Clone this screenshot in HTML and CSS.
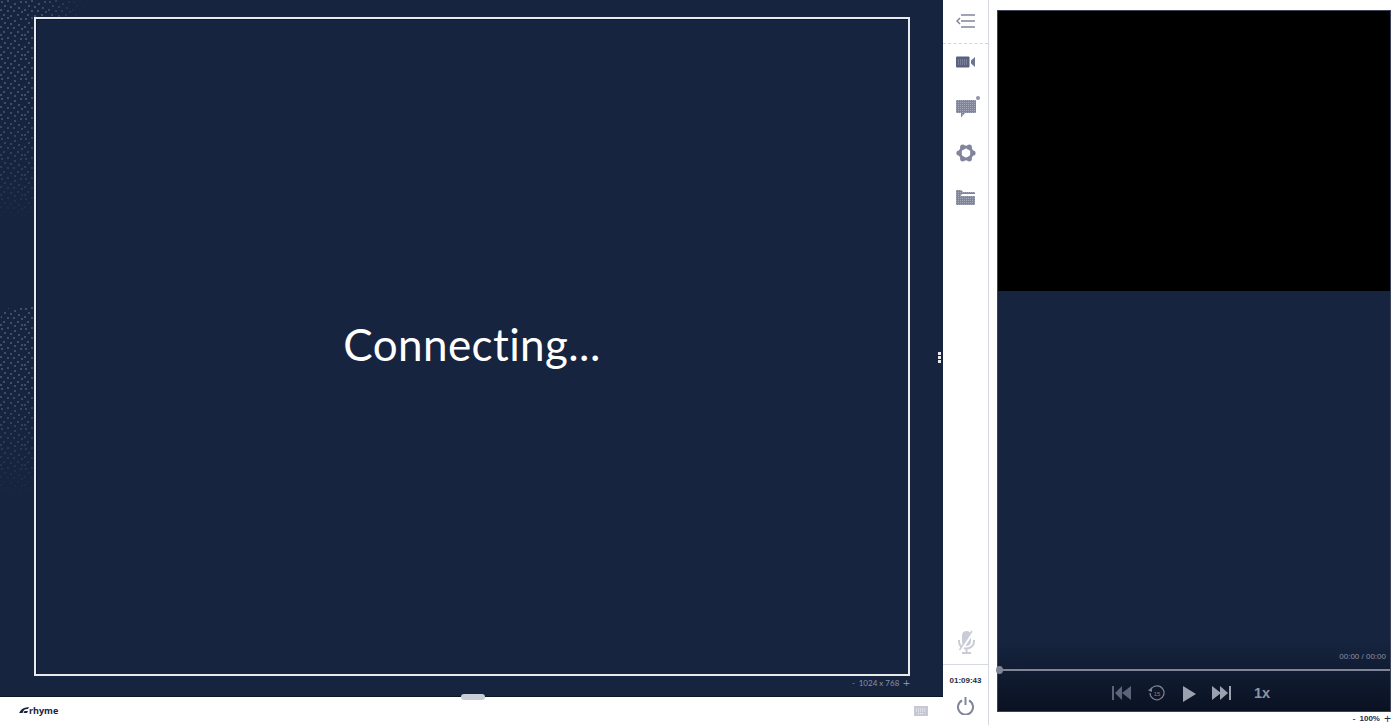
FILE: index.html
```html
<!DOCTYPE html>
<html lang="en">
<head>
	<meta charset="UTF-8">
	<title>Rhyme</title>
	<link rel="stylesheet" href="styles.css">
</head>
<body>
	<div class="app">
		<svg class="defs" width="0" height="0">
			<defs>
				<pattern id="dither" width="2" height="2" patternUnits="userSpaceOnUse">
					<rect width="1" height="1" fill="#fff" fill-opacity=".28"/>
				</pattern>
			</defs>
		</svg>
		<div class="main">
			<div class="stage">
				<span class="dots dots-top"></span>
				<span class="dots dots-left"></span>
				<span class="dots dots-mid"></span>
				<div class="frame">
					<span class="frame-text">Connecting...</span>
				</div>
				<div class="frame-size">
					<span>-</span>
					<span>1024 x 768</span>
					<span class="frame-plus">+</span>
				</div>
				<div class="grip-dots"><i></i><i></i><i></i></div>
				<span class="handle"></span>
			</div>
			<div class="footer">
				<div class="logo">
					<svg width="10" height="6" viewBox="0 0 10 6"><path d="M0 6 L2 3 Q4 .5 10 0 L9 2 Q6 2 5 3 L3.500 6 Z M5.500 4 H9 L8 6 H4.500 Z" fill="#16243f"/></svg>
					<span>rhyme</span>
				</div>
				<svg class="keyboard" width="14" height="10" viewBox="0 0 14 10"><rect width="14" height="10" fill="#c6c9d3"/><path d="M2 3h10M2 5h10M4 7.500h6" stroke="#f1f2f5" stroke-dasharray="1 1"/></svg>
			</div>
		</div>

		<div class="sidebar">
			<div class="menu-top">
				<svg width="20" height="14" viewBox="0 0 20 14" fill="none" stroke="#81859c" stroke-width="1.500"><path d="M5 1h14M5 7h14M5 13h14M4 4 1 7l3 3"/></svg>
			</div>
			<div class="tools">
				<svg width="19" height="12" viewBox="0 0 19 12"><rect width="13.500" height="11" y=".5" rx="1" fill="#5a6080"/><path d="M2 4h9M2 6h9M2 8h9" stroke="#9a9eb3" stroke-dasharray="1 1"/><path d="M15 4.500 19 1v10l-4-3.500z" fill="#70758f"/></svg>
				<div class="chat">
					<svg width="20" height="18" viewBox="0 0 20 18"><path d="M1 0h18a1 1 0 0 1 1 1v11a1 1 0 0 1-1 1H9l-4 4.500V13H1a1 1 0 0 1-1-1V1a1 1 0 0 1 1-1z" fill="#81859c"/><path d="M1 0h18a1 1 0 0 1 1 1v11a1 1 0 0 1-1 1H9l-4 4.500V13H1a1 1 0 0 1-1-1V1a1 1 0 0 1 1-1z" fill="url(#dither)"/></svg>
					<span class="chat-dot"></span>
				</div>
				<svg class="gear" width="20" height="18" viewBox="0 0 20 18" fill="#81859c"><circle cx="10" cy="9" r="6" fill="none" stroke="#81859c" stroke-width="3"/><circle cx="6.700" cy="3.200" r="2.600"/><circle cx="13.300" cy="3.200" r="2.600"/><circle cx="3" cy="9" r="2.600"/><circle cx="17" cy="9" r="2.600"/><circle cx="6.700" cy="14.800" r="2.600"/><circle cx="13.300" cy="14.800" r="2.600"/></svg>
				<svg width="19" height="15" viewBox="0 0 19 15"><path d="M0 1a1 1 0 0 1 1-1h4l2 2h11a1 1 0 0 1 1 1v1H6L4.500 6H19v8a1 1 0 0 1-1 1H1a1 1 0 0 1-1-1z" fill="#81859c"/><path d="M0 1a1 1 0 0 1 1-1h4l2 2h11a1 1 0 0 1 1 1v1H6L4.500 6H19v8a1 1 0 0 1-1 1H1a1 1 0 0 1-1-1z" fill="url(#dither)"/></svg>
			</div>
			<div class="mic">
				<svg width="18" height="24" viewBox="0 0 18 24"><rect x="5" y="1" width="9" height="15" rx="4.500" fill="#c9ccd6"/><path d="M2 10v1.500a7.500 7 0 0 0 15 0V10M9.500 19v3M5 23h9" fill="none" stroke="#c9ccd6" stroke-width="2"/><path d="M16.500 1 4 20" stroke="#fff" stroke-width="3"/><path d="M15 1 2.500 20" stroke="#c9ccd6" stroke-width="1.500"/></svg>
			</div>
			<div class="session">
				<span class="clock">01:09:43</span>
				<svg width="17" height="18" viewBox="0 0 17 18" fill="none" stroke="#81859c" stroke-width="2"><path d="M5 3.500a7.500 7.500 0 1 0 7 0M8.500 0v8"/></svg>
			</div>
		</div>

		<div class="player-col">
			<div class="player">
				<div class="video"></div>
				<div class="player-body">
					<div class="player-shade">
						<span class="player-time">00:00 / 00:00</span>
						<div class="progress"><span class="progress-knob"></span></div>
						<div class="controls">
							<svg width="19" height="14" viewBox="0 0 19 14" fill="#5d6479"><path d="M0 0h2v14H0zM10 0v14L3 7zM19 0v14l-9-7z"/></svg>
							<svg class="back15" width="17" height="16" viewBox="0 0 17 16" fill="none" stroke="#7d8395" stroke-width="1.200"><path d="M3.500 3.500A7 7 0 1 1 2 8"/><path d="M0 5.500 4 2v5z" fill="#7d8395" stroke="none"/><text x="9" y="10.500" text-anchor="middle" class="back15-num">15</text></svg>
							<svg class="play" width="13" height="16" viewBox="0 0 13 16" fill="#9ca1af"><path d="M0 0 13 8 0 16z"/></svg>
							<svg class="next" width="19" height="14" viewBox="0 0 19 14" fill="#9ca1af"><path d="M0 0l9 7-9 7zM8 0l8 7-8 7zM17 0h2v14h-2z"/></svg>
							<span class="speed">1x</span>
						</div>
					</div>
				</div>
			</div>
			<div class="zoom-bar">
				<span>-</span>
				<span>100%</span>
				<span class="zoom-plus">+</span>
			</div>
		</div>
	</div>
</body>
</html>
```

FILE: styles.css
```css
*{
	box-sizing: border-box;
}
html,body{
	margin: 0;
	height: 100%;
	overflow: hidden;
	background: #fff;
	font-family: "Lato", "Liberation Sans", sans-serif;
}
.app{
	display: flex;
	height: 725px;
}
.defs{
	flex: none;
}

/* left side */
.main{
	width: 943px;
	display: flex;
	flex-direction: column;
}
.stage{
	position: relative;
	height: 697px;
	padding: 17px 34px 0;
	background: #16243f;
	border-bottom: 1px solid #0b1526;
}
.frame{
	position: relative;
	width: 876px;
	height: 659px;
	border: 2px solid #e9eaee;
	box-shadow: inset 1px 1px 0 #0d1930;
	display: flex;
	align-items: center;
	justify-content: center;
	padding-bottom: 5px;
}
.frame-text{
	color: #fff;
	font-size: 44px;
	line-height: 1;
	letter-spacing: 0.4px;
}
.frame-size{
	margin: 1px 0 0 818px;
	width: 58px;
	display: flex;
	justify-content: space-between;
	align-items: center;
	color: #8b91a3;
	font-size: 8px;
	line-height: 12px;
	white-space: nowrap;
}
.frame-plus{
	font-size: 12px;
}
.dots{
	position: absolute;
	left: 0;
	opacity: .5;
	background-size: 24px 20px;
	background-image:
		radial-gradient(circle at 2px 2px, #6d7890 .8px, transparent 1.100px),
		radial-gradient(circle at 8px 1px, #6d7890 .8px, transparent 1.100px),
		radial-gradient(circle at 15px 4px, #6d7890 .8px, transparent 1.100px),
		radial-gradient(circle at 21px 2px, #6d7890 .8px, transparent 1.100px),
		radial-gradient(circle at 5px 6px, #6d7890 .8px, transparent 1.100px),
		radial-gradient(circle at 11px 7px, #6d7890 .8px, transparent 1.100px),
		radial-gradient(circle at 19px 8px, #6d7890 .8px, transparent 1.100px),
		radial-gradient(circle at 1px 10px, #6d7890 .8px, transparent 1.100px),
		radial-gradient(circle at 8px 11px, #6d7890 .8px, transparent 1.100px),
		radial-gradient(circle at 14px 11px, #6d7890 .8px, transparent 1.100px),
		radial-gradient(circle at 22px 12px, #6d7890 .8px, transparent 1.100px),
		radial-gradient(circle at 4px 15px, #6d7890 .8px, transparent 1.100px),
		radial-gradient(circle at 11px 16px, #6d7890 .8px, transparent 1.100px),
		radial-gradient(circle at 18px 15px, #6d7890 .8px, transparent 1.100px),
		radial-gradient(circle at 1px 18px, #6d7890 .8px, transparent 1.100px),
		radial-gradient(circle at 15px 19px, #6d7890 .8px, transparent 1.100px),
		radial-gradient(circle at 22px 18px, #6d7890 .8px, transparent 1.100px);
}
.dots-top{
	top: 0;
	width: 85px;
	height: 17px;
	-webkit-mask-image: linear-gradient(to right, #000 45%, transparent);
}
.dots-left{
	top: 17px;
	width: 33px;
	height: 205px;
	-webkit-mask-image: linear-gradient(to bottom, #000 40%, rgba(0,0,0,.5) 80%, transparent);
}
.dots-mid{
	top: 307px;
	width: 33px;
	height: 190px;
	border-radius: 14px 0 0 0;
	-webkit-mask-image: linear-gradient(to bottom, #000 40%, rgba(0,0,0,.5) 75%, transparent);
}
.grip-dots{
	position: absolute;
	right: 2px;
	top: 352px;
	display: flex;
	flex-direction: column;
	gap: 1px;
}
.grip-dots i{
	width: 3px;
	height: 3px;
	background: #e6e8ee;
}
.handle{
	position: absolute;
	left: 461px;
	bottom: -4px;
	width: 24px;
	height: 6px;
	border-radius: 3px;
	background: #c9cdd8;
}
.footer{
	flex: 1;
	display: flex;
	align-items: center;
	justify-content: space-between;
	padding: 0 15px 2px 19px;
}
.logo{
	display: flex;
	align-items: center;
	gap: 0;
	color: #16243f;
	font-size: 9px;
	font-weight: 700;
	font-family: "Open Sans", "Liberation Sans", sans-serif;
}
.keyboard{
	margin-top: 1px;
}

/* middle strip */
.sidebar{
	width: 46px;
	border-right: 1px solid #d7d9e1;
	display: flex;
	flex-direction: column;
	align-items: center;
}
.menu-top{
	width: 100%;
	height: 44px;
	border-bottom: 1px dashed #d3d5dd;
	display: flex;
	align-items: center;
	justify-content: center;
	padding: 0 0 2px 0;
}
.tools{
	display: flex;
	flex-direction: column;
	align-items: center;
	gap: 26px;
	padding-top: 12px;
}
.chat{
	position: relative;
	height: 18px;
	margin-top: 6px;
}
.gear{
	margin-bottom: 2px;
}
.chat-dot{
	position: absolute;
	right: -4px;
	top: -4px;
	width: 4px;
	height: 4px;
	border-radius: 50%;
	background: #8f93a8;
}
.mic{
	margin-top: auto;
	height: 34px;
}
.session{
	width: 100%;
	height: 61px;
	border-top: 1px solid #d7d9e1;
	display: flex;
	flex-direction: column;
	align-items: center;
	padding-top: 10px;
	gap: 11px;
}
.clock{
	color: #1f2b47;
	font-size: 8px;
	line-height: 11px;
	font-weight: 700;
	font-family: "Liberation Sans", sans-serif;
}

/* player */
.player-col{
	flex: 1;
	display: flex;
	flex-direction: column;
	padding: 10px 9px 0 8px;
}
.player{
	height: 702px;
	border: 1px solid #3c4358;
	display: flex;
	flex-direction: column;
}
.video{
	height: 280px;
	background: #000;
}
.player-body{
	flex: 1;
	display: flex;
	flex-direction: column;
	justify-content: flex-end;
	background: #16243f;
}
.player-shade{
	position: relative;
	height: 71px;
	background: linear-gradient(to bottom, #16243f, #0a1222);
}
.player-time{
	position: absolute;
	right: 4px;
	top: 11px;
	color: #8b91a3;
	font-size: 8px;
	line-height: 12px;
	font-family: "Liberation Sans", sans-serif;
}
.progress{
	position: absolute;
	left: 0;
	right: 0;
	top: 29px;
	height: 2px;
	background: #7f8697;
}
.progress-knob{
	position: absolute;
	left: -2px;
	top: -3px;
	width: 7px;
	height: 8px;
	border-radius: 50%;
	background: #7f8697;
}
.controls{
	position: absolute;
	left: 114px;
	top: 44px;
	height: 18px;
	display: flex;
	align-items: center;
}
.back15{
	margin-left: 17px;
}
.back15-num{
	fill: #7d8395;
	stroke: none;
	font-size: 6px;
	font-family: "Liberation Sans", sans-serif;
}
.play{
	margin-left: 18px;
	margin-top: 2px;
}
.next{
	margin-left: 16px;
	margin-top: -1px;
}
.speed{
	margin-left: 23px;
	color: #8f95a5;
	font-size: 14.500px;
	font-weight: 700;
	font-family: "Liberation Sans", sans-serif;
}
.zoom-bar{
	display: flex;
	justify-content: flex-end;
	align-items: center;
	gap: 4px;
	height: 13px;
	color: #1f2b47;
	font-size: 8px;
	font-weight: 700;
	font-family: "Liberation Sans", sans-serif;
}
.zoom-plus{
	font-size: 12px;
	font-weight: 400;
}
```
